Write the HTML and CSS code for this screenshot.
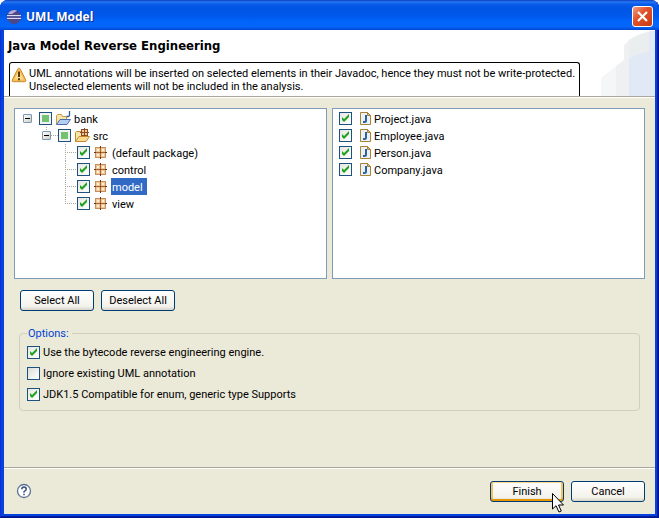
FILE: index.html
```html
<!DOCTYPE html>
<html lang="en">
<head>
    <meta charset="utf-8">
    <title>UML Model</title>
    <link rel="stylesheet" href="styles.css">
</head>
<body>
    <svg class="symbols" width="0" height="0" aria-hidden="true">
        <symbol id="icon-package" viewBox="0 0 16 16">
            <rect x="2" y="2" width="11" height="11" fill="#c98f60"/>
            <path d="M3 3h4v4H3zM8 3h4v4H8zM3 8h4v4H3zM8 8h4v4H8z" fill="#efc698"/>
            <path d="M4 4h2v2H4zM9 4h2v2H9zM4 9h2v2H4zM9 9h2v2H9z" fill="#fff0cf"/>
            <path d="M7.500 2v11M2 7.500h11" stroke="#a8683c"/>
            <path d="M7.500 1v2M7.500 12v2M1 7.500h2M12 7.500h2M7 7.500h1" stroke="#6b3414"/>
        </symbol>
        <symbol id="icon-java" viewBox="0 0 16 16">
            <path d="M1.500 1.500h7l3 3v9h-10z" fill="#e9f1fb" stroke="#a98235"/>
            <path d="M8.500 1.500v3h3z" fill="#e0bd6a" stroke="#a98235"/>
            <path d="M7 4v5.500q0 1.500-1.500 1.500H4" fill="none" stroke="#2e6299" stroke-width="2"/>
        </symbol>
    </svg>

    <div class="window">
        <div class="titlebar">
            <svg class="app-icon" viewBox="0 0 16 16" aria-hidden="true">
                <circle cx="8" cy="8" r="7" fill="#4c4787"/>
                <path d="M2 5a7 7 0 0 1 9-3.300L6 5z" fill="#b8a9d5"/>
                <path d="M1 6.500h14M1 9.500h14" stroke="#dcdcf5"/>
                <path d="M1 8h14" stroke="#6d68ad"/>
            </svg>
            <span class="title">UML Model</span>
            <button type="button" class="close" aria-label="Close">
                <svg viewBox="0 0 19 19"><path d="M5 5l9 9M14 5l-9 9" stroke="#fff" stroke-width="2.200"/></svg>
            </button>
        </div>

        <form class="dialog">
            <div class="header">
                <div class="header-text">
                    <h1>Java Model Reverse Engineering</h1>
                    <div class="message">
                        <svg class="warning" viewBox="0 0 16 16" aria-hidden="true">
                            <path d="M8 1.200q.8 0 1.200.8l5.600 11q.5 1.700-1.100 1.700H2.300q-1.600 0-1.100-1.700L6.800 2q.4-.8 1.200-.8z" fill="#f6bd55" stroke="#c98b2e"/>
                            <path d="M8 3.500L3.500 12.500h9z" fill="#fbdc92"/>
                            <path d="M8 4.500v5.500M8 11.200v2" stroke="#5e3a10" stroke-width="2"/>
                        </svg>
                        <p>UML annotations will be inserted on selected elements in their Javadoc, hence they must not be write-protected.<br>Unselected elements will not be included in the analysis.</p>
                    </div>
                </div>
                <svg class="banner" viewBox="0 0 54 66" aria-hidden="true">
                    <path d="M0 66V48l15-12v30z" fill="#f5f6f7"/>
                    <path d="M15 66V36l8-6V15L28 10v56z" fill="#eff0f1"/>
                    <path d="M28 10Q39 2 54 1v65H28z" fill="#ebeeef"/>
                    <path d="M28 28Q39 22 54 21v45H28z" fill="#e1e8f6"/>
                    <path d="M48 1.500l6-.5v65h-6z" fill="#e1e8f6"/>
                </svg>
            </div>

            <div class="content">
                <div class="panes">
                    <ul class="pane tree">
                        <li>
                            <div class="row">
                                <button type="button" class="toggle" aria-label="Collapse bank"></button>
                                <input type="checkbox" class="check partial" id="bank">
                                <svg class="icon" viewBox="0 0 16 16" aria-hidden="true">
                                    <path d="M1.500 13V4.500l1-1h4l1 2h4V9" fill="#fae6a6" stroke="#c79a47"/>
                                    <path d="M1.500 13.500L5 8.500h10.500l-3.500 5z" fill="#b5cff2" stroke="#4c6dab"/>
                                    <path d="M14.500 0v4q0 1.500-1.500 1.500h-1.500" fill="none" stroke="#2d6299" stroke-width="1.300"/>
                                </svg>
                                <label for="bank">bank</label>
                            </div>
                            <ul class="branch">
                                <li>
                                    <div class="row">
                                        <span class="elbow"></span>
                                        <button type="button" class="toggle" aria-label="Collapse src"></button>
                                        <input type="checkbox" class="check partial" id="src">
                                        <svg class="icon" viewBox="0 0 16 16" aria-hidden="true">
                                            <path d="M1.500 13V4.500l1-1h4l1 2h4V9" fill="#fae6a6" stroke="#c08a35"/>
                                            <rect x="7.500" y="1.500" width="6" height="6" fill="#efc79b" stroke="#8f4b20"/>
                                            <path d="M10.500 0v9M6 4.500h9" stroke="#8f4b20"/>
                                            <path d="M1.500 13.500L5 8.500h10.500l-3.500 5z" fill="#fadb91" stroke="#c08a35"/>
                                        </svg>
                                        <label for="src">src</label>
                                    </div>
                                    <ul class="branch">
                                        <li class="row">
                                            <span class="twig"></span>
                                            <input type="checkbox" class="check" id="default-package" checked>
                                            <svg class="icon"><use href="#icon-package"/></svg>
                                            <label for="default-package">(default package)</label>
                                        </li>
                                        <li class="row">
                                            <span class="twig"></span>
                                            <input type="checkbox" class="check" id="control" checked>
                                            <svg class="icon"><use href="#icon-package"/></svg>
                                            <label for="control">control</label>
                                        </li>
                                        <li class="row">
                                            <span class="twig"></span>
                                            <input type="checkbox" class="check" id="model" checked>
                                            <svg class="icon"><use href="#icon-package"/></svg>
                                            <label for="model" class="selected">model</label>
                                        </li>
                                        <li class="row">
                                            <span class="twig last"></span>
                                            <input type="checkbox" class="check" id="view" checked>
                                            <svg class="icon"><use href="#icon-package"/></svg>
                                            <label for="view">view</label>
                                        </li>
                                    </ul>
                                </li>
                            </ul>
                        </li>
                    </ul>

                    <ul class="pane files">
                        <li class="row">
                            <input type="checkbox" class="check" id="project" checked>
                            <svg class="icon"><use href="#icon-java"/></svg>
                            <label for="project">Project.java</label>
                        </li>
                        <li class="row">
                            <input type="checkbox" class="check" id="employee" checked>
                            <svg class="icon"><use href="#icon-java"/></svg>
                            <label for="employee">Employee.java</label>
                        </li>
                        <li class="row">
                            <input type="checkbox" class="check" id="person" checked>
                            <svg class="icon"><use href="#icon-java"/></svg>
                            <label for="person">Person.java</label>
                        </li>
                        <li class="row">
                            <input type="checkbox" class="check" id="company" checked>
                            <svg class="icon"><use href="#icon-java"/></svg>
                            <label for="company">Company.java</label>
                        </li>
                    </ul>
                </div>

                <div class="select-buttons">
                    <button type="button" class="btn">Select All</button>
                    <button type="button" class="btn">Deselect All</button>
                </div>

                <fieldset class="options">
                    <legend>Options:</legend>
                    <div class="option">
                        <input type="checkbox" class="check" id="bytecode" checked>
                        <label for="bytecode">Use the bytecode reverse engineering engine.</label>
                    </div>
                    <div class="option">
                        <input type="checkbox" class="check" id="ignore">
                        <label for="ignore">Ignore existing UML annotation</label>
                    </div>
                    <div class="option">
                        <input type="checkbox" class="check" id="jdk" checked>
                        <label for="jdk">JDK1.5 Compatible for enum, generic type Supports</label>
                    </div>
                </fieldset>
            </div>

            <div class="footer">
                <button type="button" class="help" aria-label="Help">
                    <svg viewBox="0 0 16 16">
                        <circle cx="8" cy="8" r="6.500" fill="#fff" stroke="#5d7396" stroke-width="1.300"/>
                        <path d="M5.800 6.300q0-2.200 2.200-2.200t2.200 2q0 1.200-1.200 1.800T8 9.700M8 10.700v1.600" fill="none" stroke="#3e5680" stroke-width="1.600"/>
                    </svg>
                </button>
                <button type="submit" class="btn btn-default">Finish
                    <svg class="cursor" viewBox="0 0 12 20" aria-hidden="true">
                        <path d="M.5.500v15.500l3.500-3.300 3 6.300 2.300-1-2.800-6h5z" fill="#fff" stroke="#000"/>
                    </svg>
                </button>
                <button type="button" class="btn">Cancel</button>
            </div>
        </form>
    </div>

    <script>
        // half-ticked parents
        document.querySelectorAll('.partial').forEach(box => {
            box.indeterminate = true;
        });

        document.querySelector('.dialog').addEventListener('submit', (e) => {
            e.preventDefault();
        });
    </script>
</body>
</html>
```

FILE: styles.css
```css
* {
    box-sizing: border-box;
}

body {
    margin: 0;
    font-family: Tahoma, Roboto, sans-serif;
    font-size: 11px;
    line-height: 13px;
    color: #000;
    background: #fff;
}

button {
    font: inherit;
    color: inherit;
    padding: 0;
}

ul {
    list-style: none;
    margin: 0;
    padding: 0;
}

.symbols {
    position: absolute;
}

.window {
    display: flex;
    flex-direction: column;
    min-height: 100vh;
    padding: 0 4px 4px;
    background: #0842dc;
    border-radius: 8px 8px 0 0;
    box-shadow: inset -1px -1px #00138c, inset 1px 0 #0831d9, inset -2px -2px #001ea0;
    overflow: hidden;
}

/* title bar */
.titlebar {
    display: flex;
    align-items: center;
    gap: 4px;
    height: 30px;
    margin: 0 -4px;
    padding: 3px 6px 0 6px;
    color: #fff;
    background: linear-gradient(#0a3fc4 0, #2a78f0 2px, #0a5cea 4px, #0054e3 8px, #0058ea 16px, #0266fc 22px, #0364f8 27px, #0046d0 30px);
}

.app-icon {
    width: 16px;
    height: 16px;
}

.title {
    flex: 1;
    font-family: "Trebuchet MS", "Open Sans", sans-serif;
    font-size: 12px;
    font-weight: 700;
    text-shadow: 1px 1px #0a2a8c;
}

.close {
    width: 21px;
    height: 21px;
    border: 1px solid #fff;
    border-radius: 3px;
    background: linear-gradient(135deg, #f0a084, #e2532c 40%, #c83c12);
}

.close svg {
    display: block;
}

/* wizard header */
.dialog {
    display: flex;
    flex-direction: column;
    flex: 1;
    background: #ebe9d8;
}

.header {
    display: flex;
    justify-content: space-between;
    height: 67px;
    padding-left: 4px;
    background: #fff;
    border-bottom: 1px solid #aca899;
}

.header-text {
    display: flex;
    flex-direction: column;
    justify-content: space-between;
}

h1 {
    margin: 8px 0 0;
    font-family: Tahoma, "DejaVu Sans Condensed", sans-serif;
    font-size: 13px;
    line-height: 16px;
}

.message {
    display: flex;
    gap: 2px;
    height: 34px;
    margin-left: 1px;
    padding: 4px 4px 0 1px;
    border: 1px solid #000;
    border-bottom: 0;
    border-radius: 3px 3px 0 0;
}

.message p {
    margin: 0;
    white-space: nowrap;
}

.warning {
    flex: none;
    width: 16px;
    height: 16px;
}

.banner {
    flex: none;
    width: 54px;
    height: 66px;
}

/* tree and file list */
.content {
    flex: 1;
    padding: 10px 10px 0;
    border-top: 1px solid #fff;
}

.panes {
    display: grid;
    grid-template-columns: 1fr 1fr;
    gap: 5px;
}

.pane {
    height: 171px;
    padding: 1px 6px;
    background: #fff;
    border: 1px solid #7f9db9;
}

.tree {
    padding-left: 8px;
}

.row {
    display: flex;
    align-items: center;
    height: 17px;
}

.branch {
    padding-left: 19px;
}

.row label {
    padding: 3px 4px 1px 1px;
    margin-left: 2px;
}

.row .selected {
    color: #fff;
    background: #316ac5;
}

.toggle {
    width: 9px;
    height: 9px;
    margin-right: 7px;
    border: 1px solid #7898b5;
    border-radius: 1px;
    background: linear-gradient(#000, #000) center / 5px 1px no-repeat, linear-gradient(135deg, #fff, #d2cdc0);
}

/* dotted connector lines */
.elbow {
    width: 16px;
    height: 17px;
    margin-right: -16px;
    background:
        repeating-linear-gradient(#aca899 0 1px, transparent 1px 2px) 4px top / 1px 5px no-repeat,
        repeating-linear-gradient(90deg, #aca899 0 1px, transparent 1px 2px) right center / 7px 1px no-repeat;
}

.twig {
    width: 12px;
    height: 17px;
    margin-left: 4px;
    background:
        repeating-linear-gradient(#aca899 0 1px, transparent 1px 2px) left top / 1px 17px no-repeat,
        repeating-linear-gradient(90deg, #aca899 0 1px, transparent 1px 2px) left center / 12px 1px no-repeat;
}

.last {
    background-size: 1px 9px, 12px 1px;
}

.check {
    appearance: none;
    flex: none;
    width: 13px;
    height: 13px;
    margin: 0;
    border: 1px solid #1c5180;
    background: linear-gradient(135deg, #dcdcd7, #fff);
}

.check:checked {
    background: url("data:image/svg+xml,%3Csvg xmlns='http://www.w3.org/2000/svg' viewBox='0 0 11 11'%3E%3Cpath d='M2 4v3l2 2 5-5V1L4 6z' fill='%2321a121'/%3E%3C/svg%3E") center / 11px 11px, linear-gradient(135deg, #e6e6e1, #fff);
}

.check:indeterminate {
    background: linear-gradient(#73c173, #73c173) center / 7px 7px no-repeat, #f2f2ee;
}

.icon {
    flex: none;
    width: 16px;
    height: 16px;
    margin-left: 3px;
}

.files .icon {
    margin-left: 7px;
}

.files label {
    margin-left: -2px;
}

/* buttons */
.select-buttons {
    display: flex;
    gap: 7px;
    padding: 11px 6px 0;
}

.btn {
    position: relative;
    width: 74px;
    height: 21px;
    border: 1px solid #003c74;
    border-radius: 3px;
    background: linear-gradient(#fff, #f3f2ec 80%, #d9d4c8);
}

.btn-default {
    box-shadow: inset 0 1px #fdd889, inset 0 -2px #e59700, inset 2px 0 #f6c25a, inset -2px 0 #f6c25a;
}

/* options group */
.options {
    margin: 16px 5px 0;
    padding: 2px 7px 5px;
    border: 1px solid #d0d0bf;
    border-radius: 4px;
}

legend {
    padding: 0 3px 0 1px;
    color: #0046d5;
}

.option {
    display: flex;
    align-items: center;
    gap: 3px;
    height: 21px;
}

/* footer */
.footer {
    display: flex;
    align-items: center;
    gap: 7px;
    height: 47px;
    padding: 0 10px 0 12px;
    border-top: 1px solid #aca899;
    box-shadow: inset 0 1px #fff;
}

.help {
    width: 16px;
    height: 16px;
    margin-right: auto;
    border: 0;
    background: none;
}

.help svg {
    display: block;
}

.cursor {
    position: absolute;
    top: 11px;
    left: 61px;
    width: 12px;
    height: 20px;
}
```
